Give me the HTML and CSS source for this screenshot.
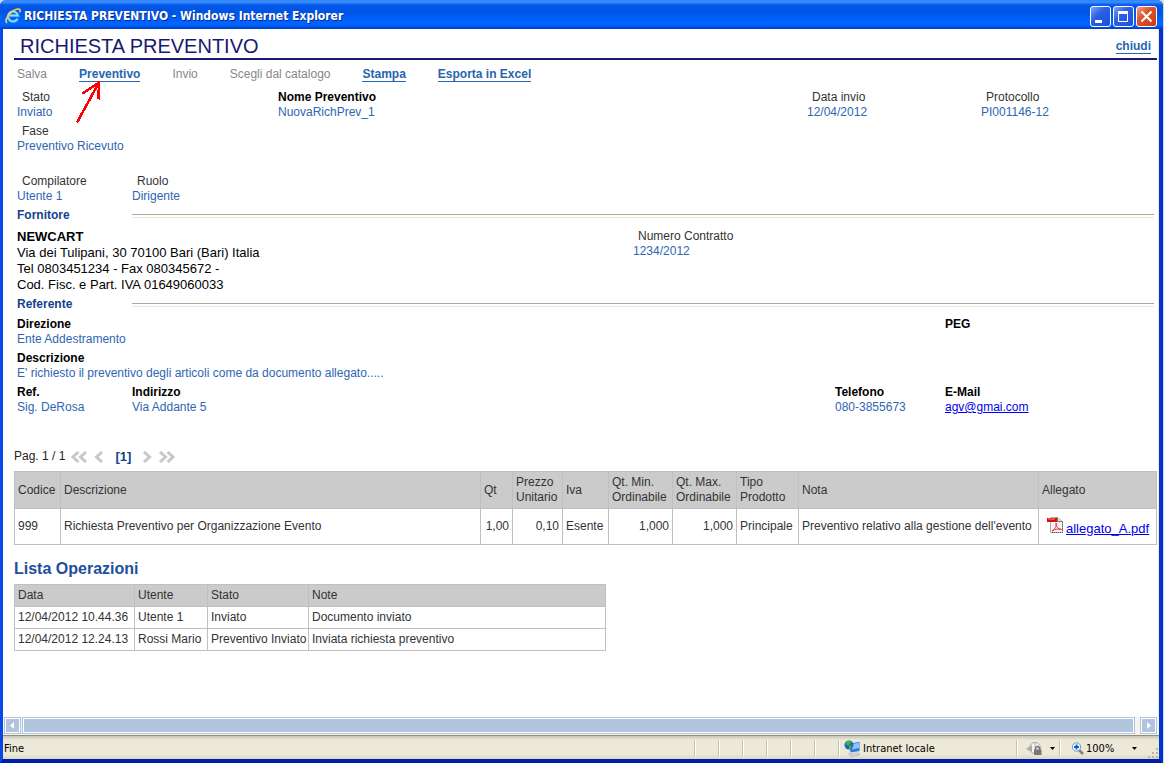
FILE: index.html
```html
<!DOCTYPE html>
<html lang="it">
<head>
<meta charset="utf-8">
<title>RICHIESTA PREVENTIVO</title>
<link rel="stylesheet" href="styles.css">
</head>
<body>
<div class="window">
  <div class="titlebar">
    <svg class="ie-icon" viewBox="0 0 16 16" aria-hidden="true">
      <path d="M12.800 10.800A5 5 0 1 1 13.200 7.800H4.500" fill="none" stroke="#35a4ee" stroke-width="3"/>
      <path d="M12.300 10.600A5 5 0 1 1 12.800 7.500H4.800" fill="none" stroke="#9fe2ff" stroke-width="1.300"/>
      <path d="M2 15C-1.500 11.500 7 1 13.800 1C15.600 1.100 15.500 3 14.600 4.400" fill="none" stroke="#f7cc55" stroke-width="1.600"/>
    </svg>
    <span class="titlebar-text">RICHIESTA PREVENTIVO - Windows Internet Explorer</span>
    <div class="window-buttons">
      <button class="win-btn" aria-label="Riduci a icona"><svg viewBox="0 0 19 19"><path d="M4 14.500h7" stroke="#fff" stroke-width="3"/></svg></button>
      <button class="win-btn" aria-label="Ingrandisci"><svg viewBox="0 0 19 19"><path d="M4.500 5v9.500h9V5" fill="none" stroke="#fff"/><path d="M4 5.500h10" stroke="#fff" stroke-width="3"/></svg></button>
      <button class="win-btn win-close" aria-label="Chiudi finestra"><svg viewBox="0 0 19 19"><path d="M4.500 4.500l10 10M14.500 4.500l-10 10" stroke="#fff" stroke-width="2.200"/></svg></button>
    </div>
  </div>

  <main class="page">
    <header class="page-head">
      <h1>RICHIESTA PREVENTIVO</h1>
      <a class="action" href="#">chiudi</a>
    </header>

    <nav class="toolbar">
      <span class="disabled">Salva</span>
      <span class="pointed"><a class="action" href="#">Preventivo</a>
        <svg class="pointer" viewBox="0 0 28 44" aria-hidden="true"><path d="M2 41.500L24 1.500M7.500 12.500L24 1.500L23.500 18.500" fill="none" stroke="#f00" stroke-width="2.500" shape-rendering="crispEdges"/></svg>
      </span>
      <span class="disabled">Invio</span>
      <span class="disabled">Scegli dal catalogo</span>
      <a class="action" href="#">Stampa</a>
      <a class="action" href="#">Esporta in Excel</a>
    </nav>

    <div class="details">
      <dl class="row row-document">
        <div class="soft"><dt>Stato</dt><dd>Inviato</dd></div>
        <div><dt>Nome Preventivo</dt><dd>NuovaRichPrev_1</dd></div>
        <div class="soft"><dt>Data invio</dt><dd>12/04/2012</dd></div>
        <div class="soft"><dt>Protocollo</dt><dd>PI001146-12</dd></div>
      </dl>
      <dl class="row row-phase">
        <div class="soft"><dt>Fase</dt><dd>Preventivo Ricevuto</dd></div>
      </dl>
      <dl class="row row-author">
        <div class="soft"><dt>Compilatore</dt><dd>Utente 1</dd></div>
        <div class="soft"><dt>Ruolo</dt><dd>Dirigente</dd></div>
      </dl>

      <h2 class="section">Fornitore</h2>
      <div class="row row-supplier">
        <address><strong>NEWCART</strong><br>Via dei Tulipani, 30 70100 Bari (Bari) Italia<br>Tel 0803451234 - Fax 080345672 -<br>Cod. Fisc. e Part. IVA 01649060033</address>
        <dl class="soft"><dt>Numero Contratto</dt><dd>1234/2012</dd></dl>
      </div>

      <h2 class="section">Referente</h2>
      <dl class="row row-office">
        <div><dt>Direzione</dt><dd>Ente Addestramento</dd></div>
        <div><dt>PEG</dt></div>
      </dl>
      <dl class="row">
        <div><dt>Descrizione</dt><dd>E' richiesto il preventivo degli articoli come da documento allegato.....</dd></div>
      </dl>
      <dl class="row row-contact">
        <div><dt>Ref.</dt><dd>Sig. DeRosa</dd></div>
        <div><dt>Indirizzo</dt><dd>Via Addante 5</dd></div>
        <div><dt>Telefono</dt><dd>080-3855673</dd></div>
        <div><dt>E-Mail</dt><dd><a class="link" href="#">agv@gmai.com</a></dd></div>
      </dl>
    </div>

    <div class="pager">
      <span>Pag. 1 / 1</span>
      <button aria-label="Prima pagina"><svg viewBox="0 0 17 12"><path d="M7.500 1L2 6l5.500 5M15 1L9.500 6l5.500 5"/></svg></button>
      <button aria-label="Pagina precedente"><svg class="single" viewBox="0 0 10 12"><path d="M8 1L2.500 6L8 11"/></svg></button>
      <b class="current">[1]</b>
      <button aria-label="Pagina successiva"><svg class="single" viewBox="0 0 10 12"><path d="M2 1l5.500 5L2 11"/></svg></button>
      <button aria-label="Ultima pagina"><svg viewBox="0 0 17 12"><path d="M2 1l5.500 5L2 11M9.500 1L15 6l-5.500 5"/></svg></button>
    </div>

    <table class="grid items">
      <colgroup><col class="c46"><col><col class="c32"><col class="c50"><col class="c46"><col class="c64"><col class="c64"><col class="c62"><col class="c240"><col class="c118"></colgroup>
      <thead>
        <tr><th>Codice</th><th>Descrizione</th><th>Qt</th><th>Prezzo<br>Unitario</th><th>Iva</th><th>Qt. Min.<br>Ordinabile</th><th>Qt. Max.<br>Ordinabile</th><th>Tipo<br>Prodotto</th><th>Nota</th><th>Allegato</th></tr>
      </thead>
      <tbody>
        <tr><td>999</td><td>Richiesta Preventivo per Organizzazione Evento</td><td class="num">1,00</td><td class="num">0,10</td><td>Esente</td><td class="num">1,000</td><td class="num">1,000</td><td>Principale</td><td>Preventivo relativo alla gestione dell'evento</td>
          <td><span class="attachment"><svg viewBox="0 0 16 16" aria-hidden="true"><path d="M3.500 .5h7l5 4v11h-12z" fill="#f7f7f7" stroke="#aaa"/><path d="M10.500 .5v4h5" fill="#ddd" stroke="#777"/><path d="M15.500 5v10.500h-11" fill="none" stroke="#555" stroke-dasharray="1 1"/><path d="M0 1h10v4H0z" fill="#d51212"/><path d="M1 2h7" stroke="#f88"/><path d="M5 14c3-2 5-5 4-8c0 4 2 6 5.500 6.500C11 11.500 8 12 5 14" fill="none" stroke="#e33"/></svg><a class="link" href="#">allegato_A.pdf</a></span></td></tr>
      </tbody>
    </table>

    <h2 class="list-title">Lista Operazioni</h2>
    <table class="grid log">
      <colgroup><col class="c120"><col class="c73"><col class="c101"><col class="c297"></colgroup>
      <thead><tr><th>Data</th><th>Utente</th><th>Stato</th><th>Note</th></tr></thead>
      <tbody>
        <tr><td>12/04/2012 10.44.36</td><td>Utente 1</td><td>Inviato</td><td>Documento inviato</td></tr>
        <tr><td>12/04/2012 12.24.13</td><td>Rossi Mario</td><td>Preventivo Inviato</td><td>Inviata richiesta preventivo</td></tr>
      </tbody>
    </table>
  </main>

  <div class="scrollbar">
    <button class="scroll-btn" aria-label="Scorri a sinistra"><svg viewBox="0 0 15 15"><path d="M9 4v7L5 7.500z" fill="#fff"/></svg></button>
    <div class="thumb"></div>
    <button class="scroll-btn" aria-label="Scorri a destra"><svg viewBox="0 0 15 15"><path d="M6 4v7l4-3.500z" fill="#fff"/></svg></button>
  </div>

  <footer class="statusbar">
    <span class="status-text">Fine</span>
    <span class="pane"></span><span class="pane"></span><span class="pane"></span><span class="pane"></span><span class="pane"></span><span class="pane"></span>
    <span class="pane zone">
      <svg class="zone-icon" viewBox="0 0 17 17" aria-hidden="true">
        <path d="M5 13.500l8-1l3 2l-9 2z" fill="#d8d8d0" stroke="#999" stroke-width=".5"/>
        <path d="M5 3l11-1.500v10L6 13z" fill="#2a7ae0" stroke="#dde8f5"/>
        <path d="M8 4l7-1v5L8 9.500z" fill="#8cc8fa"/>
        <circle cx="5" cy="5" r="4.500" fill="#2467b8"/><path d="M2 2c2-2 5-1 5 0S5 4 5 5S2 6 2 2M5 6c2-1 4 0 2 2S5 8 5 6" fill="#44b838"/>
      </svg>Intranet locale</span>
    <button class="pane protect" aria-label="Protezione">
      <svg class="protect-icon" viewBox="0 0 17 15" aria-hidden="true"><circle cx="9" cy="7" r="5.500" fill="#f4f3ef" stroke="#aaa"/><path d="M9 2v5h4" fill="none" stroke="#bbb"/><path d="M0 8l6-4v7z" fill="#aaa"/><path d="M9.500 9V7.500a2 2 0 0 1 4 0V9" fill="none" stroke="#777" stroke-width="1.500"/><path d="M8 8.500h7.500V14H8z" fill="#777"/></svg>
      <svg class="caret" viewBox="0 0 5 3" aria-hidden="true"><path d="M0 0h5L2.500 3z"/></svg>
    </button>
    <button class="pane zoom">
      <svg class="zoom-icon" viewBox="0 0 13 13" aria-hidden="true"><path d="M8 8l4 4" stroke="#8a7a6a" stroke-width="2.500"/><circle cx="5.500" cy="5" r="4.200" fill="#f5faff" stroke="#5e97d3"/><path d="M5.500 2.500v5M3 5h5" stroke="#1463be" stroke-width="2"/></svg>
      <span>100%</span>
      <svg class="caret" viewBox="0 0 5 3" aria-hidden="true"><path d="M0 0h5L2.500 3z"/></svg>
    </button>
    <svg class="grip" viewBox="0 0 12 12" aria-hidden="true"><path d="M9 1h2v2H9zM9 5h2v2H9zM5 5h2v2H5zM9 9h2v2H9zM5 9h2v2H5zM1 9h2v2H1z" fill="#b8b4a3"/></svg>
  </footer>
</div>
</body>
</html>
```
FILE: styles.css
```css
* { box-sizing: border-box; }

body {
  margin: 0;
  background: #d4d8e4;
  font: 12px/15px "Liberation Sans", Arial, sans-serif;
  color: #333;
}

button {
  margin: 0;
  padding: 0;
  border: 0;
  background: none;
  font: inherit;
  color: inherit;
}

svg { display: block; }
dl, dd, h1, h2 { margin: 0; }

.window {
  display: flex;
  flex-direction: column;
  min-height: 100vh;
  margin-right: 1px;
  border: solid #0033d0;
  border-width: 0 4px 4px 3px;
  border-bottom-color: #001fa8;
  border-left-color: #0848e8;
  border-radius: 6px 6px 0 0;
  background: #fff;
}

/* Window title bar */
.titlebar {
  display: flex;
  align-items: center;
  gap: 3px;
  height: 29px;
  margin: 0 -4px 0 -3px;
  padding: 3px 6px 0 5px;
  border-radius: 6px 6px 0 0;
  background: linear-gradient(#2f83f7 0, #3c90ff 2px, #0458ea 5px, #0054e3 12px, #0061fc 20px, #0066ff 25px, #0046d8 28px, #003dd0 29px);
  color: #fff;
}

.titlebar-text {
  flex: 1;
  font: bold 12px/16px "DejaVu Sans Condensed", "DejaVu Sans", sans-serif;
  text-shadow: 1px 1px 0 #0a2a8a;
}

.ie-icon { width: 16px; height: 16px; }
.window-buttons { display: flex; gap: 2px; }

.win-btn {
  width: 21px;
  height: 21px;
  border: 1px solid #fff;
  border-radius: 3px;
  background: linear-gradient(135deg, #7fa3f5, #2b5fe6 40%, #1c50d8);
}

.win-close { background: linear-gradient(135deg, #f0a088, #e0512c 40%, #c83c14); }
.win-btn svg { width: 19px; height: 19px; }

/* Page */
.page {
  flex: 1;
  padding: 0 1px 0 11px;
  border-right: 1px solid #ece9d8;
}

.page-head {
  display: flex;
  align-items: center;
  justify-content: space-between;
  height: 31px;
  padding: 6px 6px 0;
  border-bottom: 2px solid #191970;
}

h1 {
  font-size: 20px;
  line-height: 23px;
  font-weight: normal;
  color: #191970;
}

.action {
  font-weight: bold;
  color: #2665b0;
  text-decoration: none;
  border-bottom: 1px solid #2665b0;
  line-height: 13px;
}

.toolbar {
  display: flex;
  align-items: baseline;
  gap: 32px;
  padding: 7px 3px 0;
}

.disabled { color: #888; }
.pointed { position: relative; }

.pointer {
  position: absolute;
  top: 14px;
  left: -4px;
  width: 28px;
  height: 44px;
}

/* Field rows */
.details { padding: 8px 3px 0; }

.row {
  display: grid;
  margin-bottom: 4px;
}

.row-document { grid-template-columns: 261fr 529fr 174fr 173fr; }
.row-phase { margin-bottom: 20px; }
.row-author { grid-template-columns: 115px 1fr; }
.row-supplier { grid-template-columns: 616fr 521fr; }
.row-office { grid-template-columns: 928fr 209fr; }
.row-contact { grid-template-columns: 115fr 703fr 110fr 209fr; }

dt {
  font-weight: bold;
  color: #000;
}

.soft dt {
  padding-left: 5px;
  font-weight: normal;
  color: #333;
}

dd { color: #2f66b2; }

.section {
  display: grid;
  grid-template-columns: 115px 1fr;
  align-items: center;
  font-size: 12px;
  line-height: 15px;
  color: #15428b;
}

.section::after {
  content: "";
  height: 2px;
  border-top: 1px solid #aca899;
  border-bottom: 1px solid #ece9d8;
}

.section + .row { margin-top: 5px; }
.section + .row-supplier { margin-top: 6px; }

address {
  font-style: normal;
  font-size: 13px;
  line-height: 16px;
  color: #000;
}

.link { color: #00e; text-decoration: underline; }

/* Pager */
.pager {
  display: flex;
  align-items: center;
  gap: 6px;
  margin: 34px 0 7px;
  color: #222;
}

.pager svg {
  width: 17px;
  height: 12px;
  fill: none;
  stroke: #c8c8c8;
  stroke-width: 3;
}

.pager .single { width: 10px; }

.current {
  margin: 0 5px;
  font-size: 13px;
  color: #15428b;
}

/* Tables */
.grid {
  border-collapse: collapse;
  table-layout: fixed;
}

.grid th, .grid td {
  padding: 3px;
  border: 1px solid #c0c0c0;
  text-align: left;
  white-space: nowrap;
}

.grid th {
  background: #cbcbcb;
  font-weight: normal;
}

.grid .num { text-align: right; }
.items { width: 100%; }
.items td { height: 36px; }
.items th { height: 37px; }
.log th, .log td { height: 22px; }
.log { width: 592px; }

.c32 { width: 32px; }
.c46 { width: 46px; }
.c50 { width: 50px; }
.c62 { width: 62px; }
.c64 { width: 64px; }
.c73 { width: 73px; }
.c101 { width: 101px; }
.c118 { width: 118px; }
.c120 { width: 120px; }
.c240 { width: 240px; }
.c297 { width: 297px; }

.attachment {
  display: flex;
  align-items: flex-end;
  gap: 3px;
  padding-left: 5px;
  font-size: 13px;
  line-height: 15px;
}

.attachment svg { width: 16px; height: 16px; margin-bottom: 3px; }

.list-title {
  margin: 14px 0 5px;
  font-size: 16px;
  line-height: 20px;
  color: #1d4f9c;
}

/* Horizontal scroll bar */
.scrollbar {
  display: flex;
  gap: 1px;
  height: 18px;
  padding: 0 2px 1px 1px;
  background: #f5f4f0;
}

.scroll-btn {
  width: 17px;
  border: 1px solid #b0c4de;
  background: #b0c4de;
  box-shadow: inset 0 0 0 1px #fff;
}

.scroll-btn svg { width: 15px; height: 15px; }

.thumb {
  flex: 1;
  margin-right: 4px;
  border: 1px solid #b0c4de;
  background: #b0c4de;
  box-shadow: inset 0 0 0 1px #fff;
}

/* Status bar */
.statusbar {
  display: flex;
  align-items: center;
  height: 24px;
  padding: 2px 0 0 1px;
  border-top: 1px solid #8f8c80;
  background: linear-gradient(#c8c5b6, #ece9d8 4px, #ece9d8 18px, #dcd8c4);
  font: 11px/14px "DejaVu Sans Condensed", "DejaVu Sans", sans-serif;
  color: #000;
}

.status-text { flex: 1; }

.pane {
  display: flex;
  align-items: center;
  width: 24px;
  height: 17px;
  border-left: 1px solid #c5c2b0;
  box-shadow: inset 1px 0 #fff;
}

.zone { width: 178px; gap: 2px; padding-left: 5px; }
.zone-icon { width: 17px; height: 17px; }
.protect { width: 43px; gap: 7px; padding-left: 9px; }
.protect-icon { width: 17px; height: 15px; }
.caret { width: 5px; height: 3px; }
.zoom { width: 88px; gap: 2px; padding: 0 10px 0 11px; }
.zoom span { flex: 1; text-align: left; }
.zoom-icon { width: 13px; height: 13px; }
.grip { width: 12px; height: 12px; align-self: flex-end; }
```
